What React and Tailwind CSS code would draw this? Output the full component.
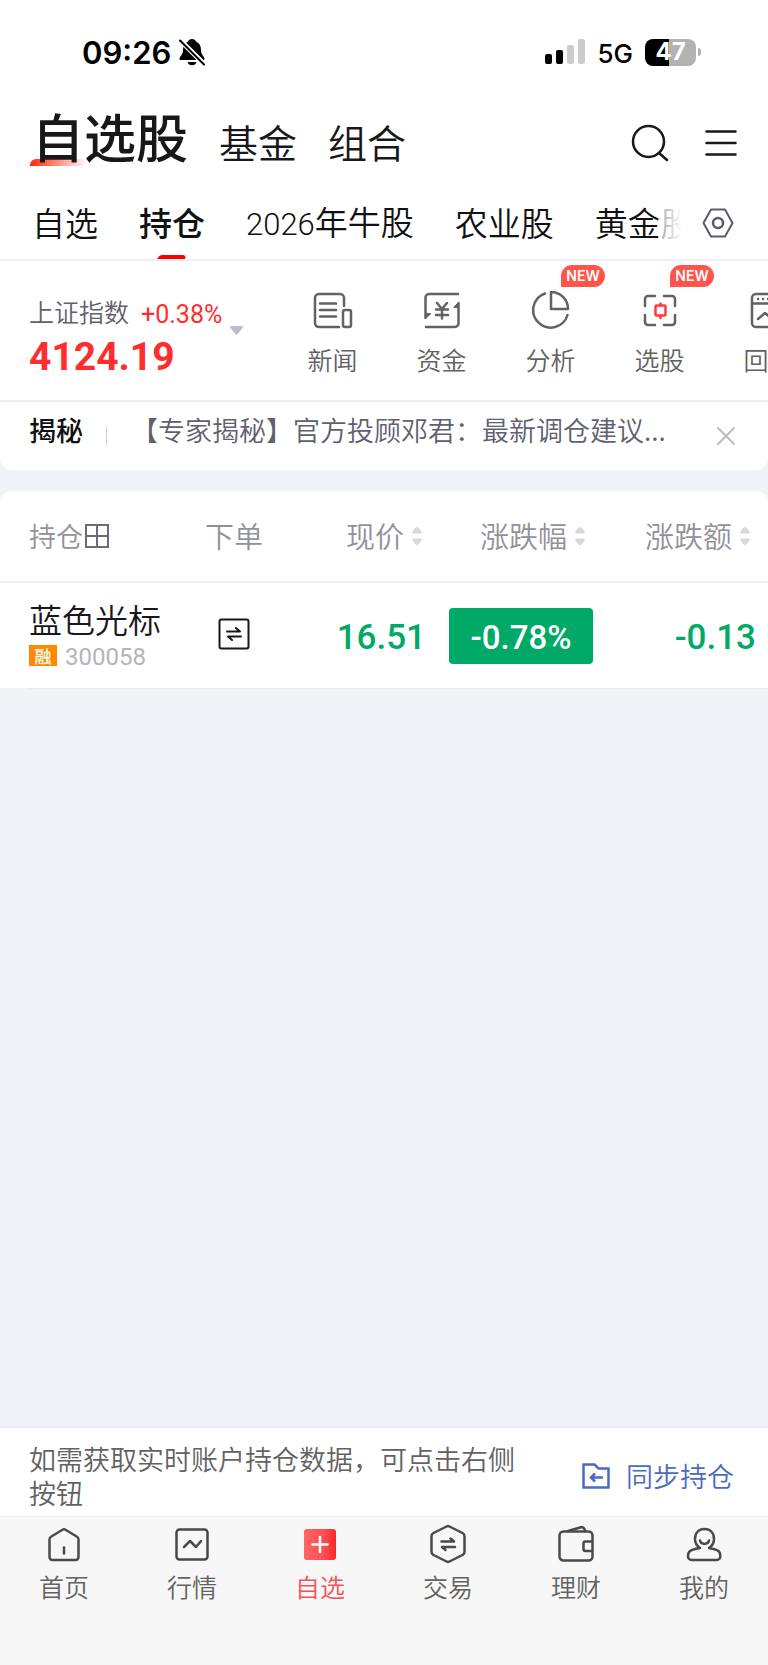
import React, { useState } from 'react';

const Icon = ({ size = 36, className = '', children }) => (
  <svg
    width={size}
    height={size}
    viewBox={`0 0 ${size} ${size}`}
    fill="none"
    stroke="currentColor"
    strokeWidth="2.5"
    strokeLinecap="round"
    strokeLinejoin="round"
    className={`shrink-0 ${className}`}
    aria-hidden="true"
  >
    {children}
  </svg>
);

const NewsIcon = () => (
  <Icon size={40}>
    <path d="M26 36H6a4 4 0 0 1-4-4V7a4 4 0 0 1 4-4h21a4 4 0 0 1 4 4v8" />
    <path d="M7 12.500h16M7 19h16M7 25.500h16" />
    <rect x="30" y="19" width="8" height="17" rx="2" />
  </Icon>
);

const FundsIcon = () => (
  <Icon size={40}>
    <path d="M36 3H7a3.500 3.500 0 0 0-3.500 3.500V27" />
    <path d="M4 36h29a3.500 3.500 0 0 0 3.500-3.500V12" />
    <path d="M3.500 22.500v5l5-4.500zM36.500 16.500v-5L32 16z" fill="currentColor" strokeWidth="1" />
    <path d="M15 12l5 6 5-6M14 18.500h12M14 24h12M20 18.500v9" />
  </Icon>
);

const AnalysisIcon = () => (
  <Icon size={40}>
    <path d="M14 2.500A17.500 17.500 0 1 0 36.500 24" />
    <path d="M20 1a17 17 0 0 1 17 17H20z" />
  </Icon>
);

const PickIcon = () => (
  <Icon size={40}>
    <path d="M5 15V8a3 3 0 0 1 3-3h7M24 5h8a3 3 0 0 1 3 3v7M35 24v7a3 3 0 0 1-3 3h-8M15 34H8a3 3 0 0 1-3-3v-7" />
    <g stroke="#ff3b3b">
      <rect x="15.500" y="14.500" width="10" height="10" rx="1" />
      <path d="M20.500 12.500v2M20.500 24.500v2.500" />
    </g>
  </Icon>
);

const BacktestIcon = () => (
  <Icon size={40}>
    <rect x="3" y="3" width="33" height="33" rx="4" />
    <path d="M3 12.500h33M9 8h.1M14 8h.1M19 8h.1" />
    <path d="M9 28l7-6 6 5 8-7" />
  </Icon>
);

const HomeIcon = () => (
  <Icon>
    <path d="M3.500 13.500c0-1.500.500-2.300 1.800-3L16.500 3.800c1-.600 2-.600 3 0L30.700 10.500c1.200.700 1.800 1.500 1.800 3V31a3 3 0 0 1-3 3h-23a3 3 0 0 1-3-3z" />
    <path d="M18 21.500v6" />
  </Icon>
);

const MarketIcon = () => (
  <Icon>
    <rect x="2.500" y="3.500" width="31" height="30" rx="3" />
    <path d="M10 21l6-6 6 6 5-6" />
  </Icon>
);

const WatchlistIcon = () => (
  <Icon>
    <defs>
      <linearGradient id="watch" x1="0" y1="0" x2="1" y2="0">
        <stop offset="0" stopColor="#ff6464" />
        <stop offset="0.6" stopColor="#fa5055" />
        <stop offset="1" stopColor="#f5282d" />
      </linearGradient>
    </defs>
    <rect x="2" y="3" width="32" height="31" rx="3" fill="url(#watch)" stroke="none" />
    <path d="M18 11v15M10.500 18.500h15" stroke="#fff" />
  </Icon>
);

const TradeIcon = () => (
  <Icon size={40} className="-my-0.5">
    <path d="M18.500 2.500c1-.500 2-.500 3 0l13 6.500c1.500.800 2 1.700 2 3V28c0 1.500-.500 2.300-2 3l-13 6.500c-1 .500-2 .500-3 0l-13-6.500c-1.500-.700-2-1.500-2-3V12c0-1.300.500-2.200 2-3z" />
    <path d="M13.500 17.500H26l-3.500-3M27 23H14l3.500 3" />
  </Icon>
);

const WealthIcon = () => (
  <Icon>
    <rect x="1.500" y="5.500" width="33" height="29" rx="4" />
    <path d="M10 5l13-3.800c2-.500 4 1.500 4 4M34 15.500h-6.500a2 2 0 0 0-2 2V23a2 2 0 0 0 2 2H34" />
  </Icon>
);

const MineIcon = () => (
  <Icon>
    <path d="M14 22c-3-2-5-5.500-5-9 0-6 3.500-10 9.500-10S28 7 28 13c0 3.500-2 7-5 9 0 0 8 1.500 10 3.500 1.200 1.200 1.300 3 1.300 5a3.500 3.500 0 0 1-3.500 3.500H5.500A3.500 3.500 0 0 1 2 30.500c0-2 .200-3.800 1.500-5C5.500 23.500 14 22 14 22z" />
    <path d="M14 14.500c1 4.500 8 4.500 9 0" />
  </Icon>
);

const SortArrows = () => (
  <svg width="10" height="20" viewBox="0 0 10 20" fill="#d8d8d8" aria-hidden="true">
    <path d="M4 1.200a1.400 1.400 0 0 1 2 0l3.600 4.300c.7 1 .2 2-.9 2H1.300c-1.100 0-1.600-1-.9-2zM4 18.800a1.400 1.400 0 0 0 2 0l3.600-4.300c.7-1 .2-2-.9-2H1.300c-1.100 0-1.600 1-.9 2z" />
  </svg>
);

const tools = [
  { name: '新闻', icon: NewsIcon },
  { name: '资金', icon: FundsIcon },
  { name: '分析', icon: AnalysisIcon, isNew: true },
  { name: '选股', icon: PickIcon, isNew: true },
  { name: '回测', icon: BacktestIcon },
];

const navItems = [
  { name: '首页', icon: HomeIcon },
  { name: '行情', icon: MarketIcon },
  { name: '自选', icon: WatchlistIcon },
  { name: '交易', icon: TradeIcon },
  { name: '理财', icon: WealthIcon },
  { name: '我的', icon: MineIcon },
];

const holdings = [
  { code: '300058', name: '蓝色光标', price: '16.51', percent: '-0.78%', change: '-0.13' },
];

const StatusBar = () => (
  <div className="flex h-[104px] items-center justify-between pl-[82px] pr-[67px] font-['Inter',sans-serif] text-black">
    <div className="flex items-center gap-2">
      <span className="text-[31px] font-semibold leading-none">09:26</span>
      <svg width="26" height="28" viewBox="0 0 26 28" aria-hidden="true">
        <path d="M13 1c-2 0-3.500 1-4 2.500C5.500 5 4 8 4 12c0 5-3.500 6.500-3.500 9 0 .700.500 1 1.200 1h22.600c.700 0 1.200-.300 1.200-1 0-2.500-3.500-4-3.500-9 0-4-1.500-7-5-8.500C16.500 2 15 1 13 1zM8.500 24h9c-.500 2-2.300 3.300-4.500 3.300S9 26 8.500 24z" />
        <path d="M0 1l26 26" stroke="#fff" strokeWidth="5" />
        <path d="M1 2.500l24 24" stroke="#000" strokeWidth="2" strokeLinecap="round" />
      </svg>
    </div>
    <div className="flex items-center">
      <svg width="40" height="26" viewBox="0 0 40 26" aria-hidden="true">
        <rect x="0" y="15" width="7" height="10" rx="2" />
        <rect x="11" y="11" width="7" height="14" rx="2" />
        <rect x="22" y="6" width="7" height="19" rx="2" fill="#ccc" />
        <rect x="33" y="0" width="7" height="25" rx="2" fill="#ccc" />
      </svg>
      <span className="ml-3 pt-1 text-[26px] font-medium leading-none">5G</span>
      <span className="ml-3 flex h-[27px] w-[51px] items-center justify-center rounded-lg bg-linear-to-r from-black from-47% to-[#b3b3b3] to-47% text-2xl font-bold leading-none text-white">
        47
      </span>
      <span className="ml-0.5 h-2 w-[3px] rounded-r-full bg-[#b3b3b3]" />
    </div>
  </div>
);

const Header = () => (
  <header className="flex h-[76px] items-center justify-between pl-8 pr-[31px] text-[#18181c]">
    <nav className="flex items-baseline gap-[31px] pb-2">
      <a href="#stocks" className="relative text-[52px] font-medium leading-[68px]">
        <span className="absolute bottom-1 -left-0.5 h-[7px] w-[55px] rounded-tl-md bg-linear-to-r from-[#ff2a00] to-[#ff2a00]/5" />
        <span className="relative">自选股</span>
      </a>
      <a href="#funds" className="text-[39px] leading-[68px]">基金</a>
      <a href="#groups" className="text-[39px] leading-[68px]">组合</a>
    </nav>
    <div className="flex items-center gap-9 pt-0.5">
      <button type="button" aria-label="搜索">
        <Icon size={38}>
          <circle cx="17.500" cy="17.500" r="15.500" />
          <path d="M28 29l8 7" />
        </Icon>
      </button>
      <button type="button" aria-label="菜单">
        <Icon size={32}>
          <path d="M1.500 4.500h29M1.500 16h29M1.500 27.500h29" />
        </Icon>
      </button>
    </div>
  </header>
);

const GroupTabs = () => (
  <div className="flex h-[81px] items-center border-b-2 border-[#f0f1f7] pr-[34px] text-[#111114]">
    <div className="relative min-w-0 flex-1 self-stretch overflow-hidden">
      <nav className="flex h-full items-center gap-[41px] whitespace-nowrap pl-8 pt-1.5 text-[33px]">
        <a href="#watch">自选</a>
        <a href="#holding" aria-current="page" className="relative flex h-full items-center font-medium">
          持仓
          <span className="absolute bottom-0 left-1/2 h-1 w-7 -translate-x-1/2 -skew-x-24 rounded-t-sm bg-[#ff0000]" />
        </a>
        <a href="#bull"><span className="font-['Roboto'] text-[31px]">2026</span>年牛股</a>
        <a href="#farm">农业股</a>
        <a href="#gold">黄金股</a>
      </nav>
      <span className="absolute inset-y-0 right-0 w-6 bg-linear-to-r from-white/60 to-white" />
    </div>
    <button type="button" aria-label="分组设置" className="ml-5 pt-1.5 text-[#5a5a6c]">
      <Icon size={32}>
        <path d="M9 2.500h14l7.500 13.500L23 29.500H9L1.500 16z" strokeWidth="2" />
        <circle cx="16" cy="16" r="5" />
      </Icon>
    </button>
  </div>
);

const IndexBar = () => (
  <section className="flex h-[141px] overflow-hidden border-b-2 border-[#ebecf2]">
    <button type="button" className="flex w-[278px] shrink-0 items-center gap-2 pl-[29px] text-left">
      <span className="pt-3">
        <span className="flex items-end gap-3">
          <span className="pb-2 text-[25px] leading-8 text-[#60606f]">上证指数</span>
          <span className="font-['Roboto'] text-[25px] font-normal leading-10 text-[#ff2d2d]">+0.38%</span>
        </span>
        <span className="block font-['Roboto'] text-[39px] font-bold leading-11 text-[#ff2d2d]">4124.19</span>
      </span>
      <svg width="13" height="9" viewBox="0 0 13 9" fill="#bdbcca" aria-hidden="true">
        <path d="M1.500 0h10c1.300 0 1.700 1.200 1 2L7.700 8a1.500 1.500 0 0 1-2.400 0L.5 2c-.7-.8-.3-2 1-2z" />
      </svg>
    </button>
    <div className="flex flex-1">
      {tools.map(({ name, icon: ToolIcon, isNew }) => (
        <button
          key={name}
          type="button"
          className="relative flex w-[109px] shrink-0 flex-col items-center pt-[30px] text-[#626262]"
        >
          <ToolIcon />
          <span className="mt-1.5 text-[25px] leading-11">{name}</span>
          {isNew && (
            <span className="absolute left-[65px] top-1 flex h-[22px] w-11 items-center justify-center rounded-full rounded-bl-none bg-[#ff554b] font-['Inter',sans-serif] text-sm font-semibold text-white">
              NEW
            </span>
          )}
        </button>
      ))}
    </div>
  </section>
);

const Notice = ({ onClose }) => (
  <section className="flex h-[68px] items-center rounded-b-xl bg-white pl-[29px] pr-8 text-[27px]">
    <strong className="pb-3 font-medium text-[#111114]">揭秘</strong>
    <span className="ml-[23px] h-5 w-px bg-[#d2d2d8]" />
    <a href="#notice" className="ml-6 min-w-0 flex-1 truncate pb-3 text-[#60606f]">
      【专家揭秘】官方投顾邓君：最新调仓建议...
    </a>
    <button type="button" aria-label="关闭" onClick={onClose} className="text-[#bbbac9]">
      <Icon size={20}>
        <path d="M2 2l16 16M18 2L2 18" strokeWidth="2" />
      </Icon>
    </button>
  </section>
);

const SortHeader = ({ label, className }) => (
  <th className={`font-[350] ${className}`}>
    <button type="button" className="inline-flex items-center gap-2 whitespace-nowrap">
      {label}
      <SortArrows />
    </button>
  </th>
);

const HoldingsTable = () => (
  <table className="w-full table-fixed border-collapse rounded-t-xl bg-white">
    <colgroup>
      <col className="w-[190px]" />
      <col className="w-[88px]" />
      <col className="w-[148px]" />
      <col className="w-[167px]" />
      <col className="w-[175px]" />
    </colgroup>
    <thead>
      <tr className="h-[91px] border-b-2 border-[#eeeff5] text-[29px] text-[#919199]">
        <th className="pl-[29px] text-left text-[27px] font-[350]">
          <span className="flex items-center gap-0.5">
            持仓
            <svg width="24" height="24" viewBox="0 0 24 24" fill="none" stroke="#6b6b7c" strokeWidth="2" aria-hidden="true">
              <path d="M1 1h22v22H1zM12 1v22M1 12h22" />
            </svg>
          </span>
        </th>
        <th className="text-center font-[350]">下单</th>
        <SortHeader label="现价" className="pr-1 text-right" />
        <SortHeader label="涨跌幅" className="pr-2 text-right" />
        <SortHeader label="涨跌额" className="pr-[18px] text-right" />
      </tr>
    </thead>
    <tbody>
      {holdings.map((stock) => (
        <tr key={stock.code} className="h-[106px]">
          <td className="pb-1 pl-[29px]">
            <p className="text-[33px] leading-11 text-[#18181c]">{stock.name}</p>
            <p className="flex items-center gap-2">
              <span className="flex h-[21px] w-7 items-center justify-center bg-[#ff8a00] text-[17px] font-medium leading-none text-white">
                融
              </span>
              <span className="pt-0.5 font-['Roboto'] text-2xl font-normal leading-7 text-[#b4b4ba]">{stock.code}</span>
            </p>
          </td>
          <td className="pb-1 text-center">
            <button type="button" aria-label="下单" className="align-middle text-[#18181c]">
              <Icon size={32}>
                <rect x="1.500" y="1.500" width="29" height="29" rx="2" strokeWidth="2" />
                <path d="M9 13.500h13l-4-3.500M23 18.500H10l4 3.500" strokeWidth="2" />
              </Icon>
            </button>
          </td>
          <td className="pt-1.5 text-right font-['Roboto'] text-[35px] font-medium text-[#00a968]">{stock.price}</td>
          <td className="font-['Roboto'] text-[33px] font-medium text-white">
            <span className="ml-auto flex h-14 w-36 items-center justify-center rounded-sm bg-[#00a968] pt-1">
              {stock.percent}
            </span>
          </td>
          <td className="pr-3 pt-1.5 text-right font-['Roboto'] text-[35px] font-medium text-[#00a968]">{stock.change}</td>
        </tr>
      ))}
    </tbody>
  </table>
);

const SyncBar = () => (
  <section className="flex items-center justify-between border-t-2 border-[#e9eaf3] bg-white pl-[29px] pr-[34px] pt-3.5 text-[27px]">
    <p className="max-w-[500px] pb-1.5 leading-[34px] text-[#626262]">
      如需获取实时账户持仓数据，可点击右侧按钮
    </p>
    <button type="button" className="flex items-center gap-4 whitespace-nowrap pb-1.5 text-[#4a6bbf]">
      <svg width="28" height="26" viewBox="0 0 28 26" fill="none" stroke="currentColor" strokeWidth="2.5" aria-hidden="true">
        <path d="M1.500 1.500h11l4 4h10v19h-25zM21 14.500H9M13 10.500l-4 4 4 4" />
      </svg>
      同步持仓
    </button>
  </section>
);

const BottomNav = () => (
  <nav className="grid h-[149px] grid-cols-6 border-t border-[#efefef] bg-[#f7f7f7]">
    {navItems.map(({ name, icon: NavIcon }) => (
      <a
        key={name}
        href={`#${name}`}
        className={`flex flex-col items-center pt-[9px] text-[25px] ${
          name === '自选' ? 'text-[#fa5055]' : 'text-[#626262]'
        }`}
      >
        <span className="text-[#4a4a4a]"><NavIcon /></span>
        <span className="mt-1 leading-10">{name}</span>
      </a>
    ))}
  </nav>
);

const App = () => {
  const [showNotice, setShowNotice] = useState(true);

  return (
    <div className="flex min-h-screen flex-col overflow-x-hidden bg-[#f2f3f9] font-['Noto_Sans_CJK_SC',sans-serif] font-[350]">
      <div className="bg-white">
        <StatusBar />
        <Header />
        <GroupTabs />
        <IndexBar />
      </div>
      {showNotice && <Notice onClose={() => setShowNotice(false)} />}
      <main className="mt-[21px] flex-1">
        <HoldingsTable />
        <hr className="ml-7 border-[#ebecf2]" />
      </main>
      <SyncBar />
      <BottomNav />
    </div>
  );
};

export default App;
